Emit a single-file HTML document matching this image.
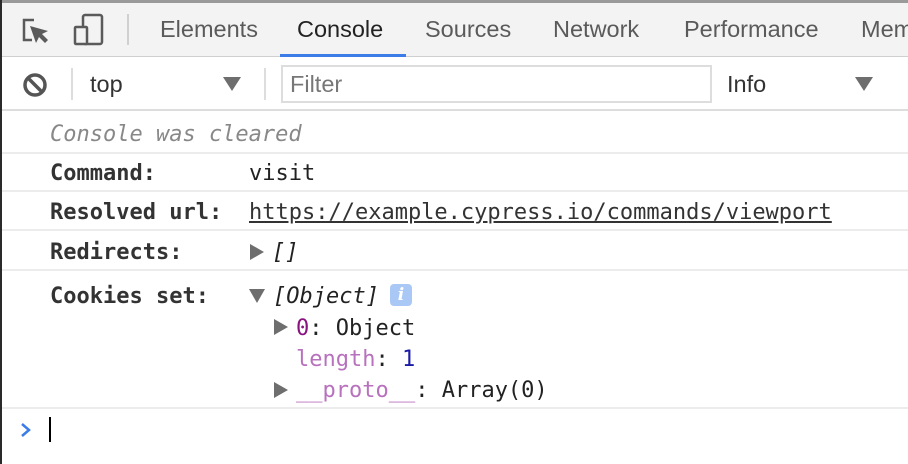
<!DOCTYPE html>
<html><head><style>
body{margin:0;width:908px;height:464px;overflow:hidden;background:#fff;font-family:"Liberation Sans",Arial,sans-serif;position:relative}
.a{position:absolute;white-space:nowrap}
.m{font-family:"DejaVu Sans Mono","Liberation Mono",monospace;font-size:22px;color:#222;margin-top:2px}
.tab{font-size:23.5px;color:#5a5a5a;top:16px}
.sep{position:absolute;left:2px;right:0;height:2px;background:#ececec}
</style></head><body>
<div class="a" style="left:0;top:0;width:2px;height:464px;background:#2a2a2a"></div>
<div class="a" style="left:2px;top:0;right:0;height:3px;background:#9a9a9a"></div>
<div class="a" style="left:2px;top:3px;right:0;height:53px;background:#f3f3f3;border-bottom:1px solid #cfcfcf"></div>
<div class="a" style="left:280px;top:54px;width:126px;height:3px;background:#3b7ce8"></div>
<svg class="a" style="left:20px;top:14px" width="34" height="34" viewBox="0 0 34 34"><path d="M14 6H4v20h8" fill="none" stroke="#5a5a5a" stroke-width="2.5"/><path d="M10 12l6 17 3-6 6 6 3-3-6-6 6-3z" fill="#5a5a5a"/></svg>
<svg class="a" style="left:72px;top:12px" width="34" height="36" viewBox="0 0 34 36"><rect x="11" y="3" width="19" height="29" rx="2" fill="none" stroke="#5a5a5a" stroke-width="2.5"/><rect x="3" y="15" width="12" height="17" rx="1" fill="#f3f3f3" stroke="#5a5a5a" stroke-width="2.5"/></svg>
<div class="a" style="left:127px;top:14px;width:2px;height:31px;background:#d0d0d0"></div>
<div class="a tab" style="left:160px">Elements</div>
<div class="a tab" style="left:297px;color:#222">Console</div>
<div class="a tab" style="left:425px">Sources</div>
<div class="a tab" style="left:553px">Network</div>
<div class="a tab" style="left:684px">Performance</div>
<div class="a tab" style="left:861px">Mem</div>
<svg class="a" style="left:22px;top:72px" width="26" height="26" viewBox="0 0 26 26"><circle cx="13" cy="13" r="10" fill="none" stroke="#555" stroke-width="3.5"/><path d="M6 6l14 14" stroke="#555" stroke-width="3.5"/></svg>
<div class="a" style="left:71px;top:68px;width:2px;height:32px;background:#ddd"></div>
<div class="a" style="left:90px;top:71px;font-size:23.5px;color:#333">top</div>
<svg class="a" style="left:223px;top:77px" width="18" height="14"><path d="M0 0h18L9 14z" fill="#6e6e6e"/></svg>
<div class="a" style="left:264px;top:68px;width:2px;height:32px;background:#ddd"></div>
<div class="a" style="left:281px;top:65px;width:431px;height:38px;border:2px solid #ddd;box-sizing:border-box"></div>
<div class="a" style="left:290px;top:71px;font-size:23.5px;color:#777">Filter</div>
<div class="a" style="left:727px;top:71px;font-size:23.5px;color:#333">Info</div>
<svg class="a" style="left:855px;top:77px" width="18" height="14"><path d="M0 0h18L9 14z" fill="#6e6e6e"/></svg>
<div class="sep" style="top:109px;background:#ddd"></div>
<div class="a m" style="left:50px;top:120px;font-style:italic;color:#888">Console was cleared</div>
<div class="sep" style="top:152px"></div>
<div class="a m" style="left:50px;top:159px;font-weight:bold;color:#333">Command:</div>
<div class="a m" style="left:249px;top:159px">visit</div>
<div class="sep" style="top:190px"></div>
<div class="a m" style="left:50px;top:198px;font-weight:bold;color:#333">Resolved url:</div>
<div class="a m" style="left:249px;top:198px;text-decoration:underline;color:#333">https://example.cypress.io/commands/viewport</div>
<div class="sep" style="top:229px"></div>
<div class="a m" style="left:50px;top:238px;font-weight:bold;color:#333">Redirects:</div>
<svg class="a" style="left:250px;top:244px" width="14" height="16"><path d="M0 0v16l14-8z" fill="#6e6e6e"/></svg>
<div class="a m" style="left:272px;top:238px;font-style:italic">[]</div>
<div class="sep" style="top:269px"></div>
<div class="a m" style="left:50px;top:282px;font-weight:bold;color:#333">Cookies set:</div>
<svg class="a" style="left:249px;top:289px" width="16" height="14"><path d="M0 0h16L8 14z" fill="#6e6e6e"/></svg>
<div class="a m" style="left:273px;top:282px;font-style:italic">[Object]</div>
<div class="a" style="left:390px;top:284px;width:22px;height:22px;border-radius:4px;background:#a9c8f5;color:#fff;font-style:italic;font-weight:bold;font-size:17px;text-align:center;line-height:22px;font-family:'DejaVu Serif',serif">i</div>
<svg class="a" style="left:274px;top:319px" width="14" height="16"><path d="M0 0v16l14-8z" fill="#6e6e6e"/></svg>
<div class="a m" style="left:296px;top:314px"><span style="color:#881280">0</span>: Object</div>
<div class="a m" style="left:296px;top:345px"><span style="color:#b871bd">length</span>: <span style="color:#1a1aa6">1</span></div>
<svg class="a" style="left:274px;top:382px" width="14" height="16"><path d="M0 0v16l14-8z" fill="#6e6e6e"/></svg>
<div class="a m" style="left:296px;top:376px"><span style="color:#b871bd">__proto__</span>: Array(0)</div>
<div class="sep" style="top:407px"></div>
<svg class="a" style="left:20px;top:423px" width="12" height="14"><path d="M2 1l7 6-7 6" fill="none" stroke="#3b7ce8" stroke-width="2.5"/></svg>
<div class="a" style="left:49px;top:417px;width:2px;height:25px;background:#000"></div>
</body></html>
